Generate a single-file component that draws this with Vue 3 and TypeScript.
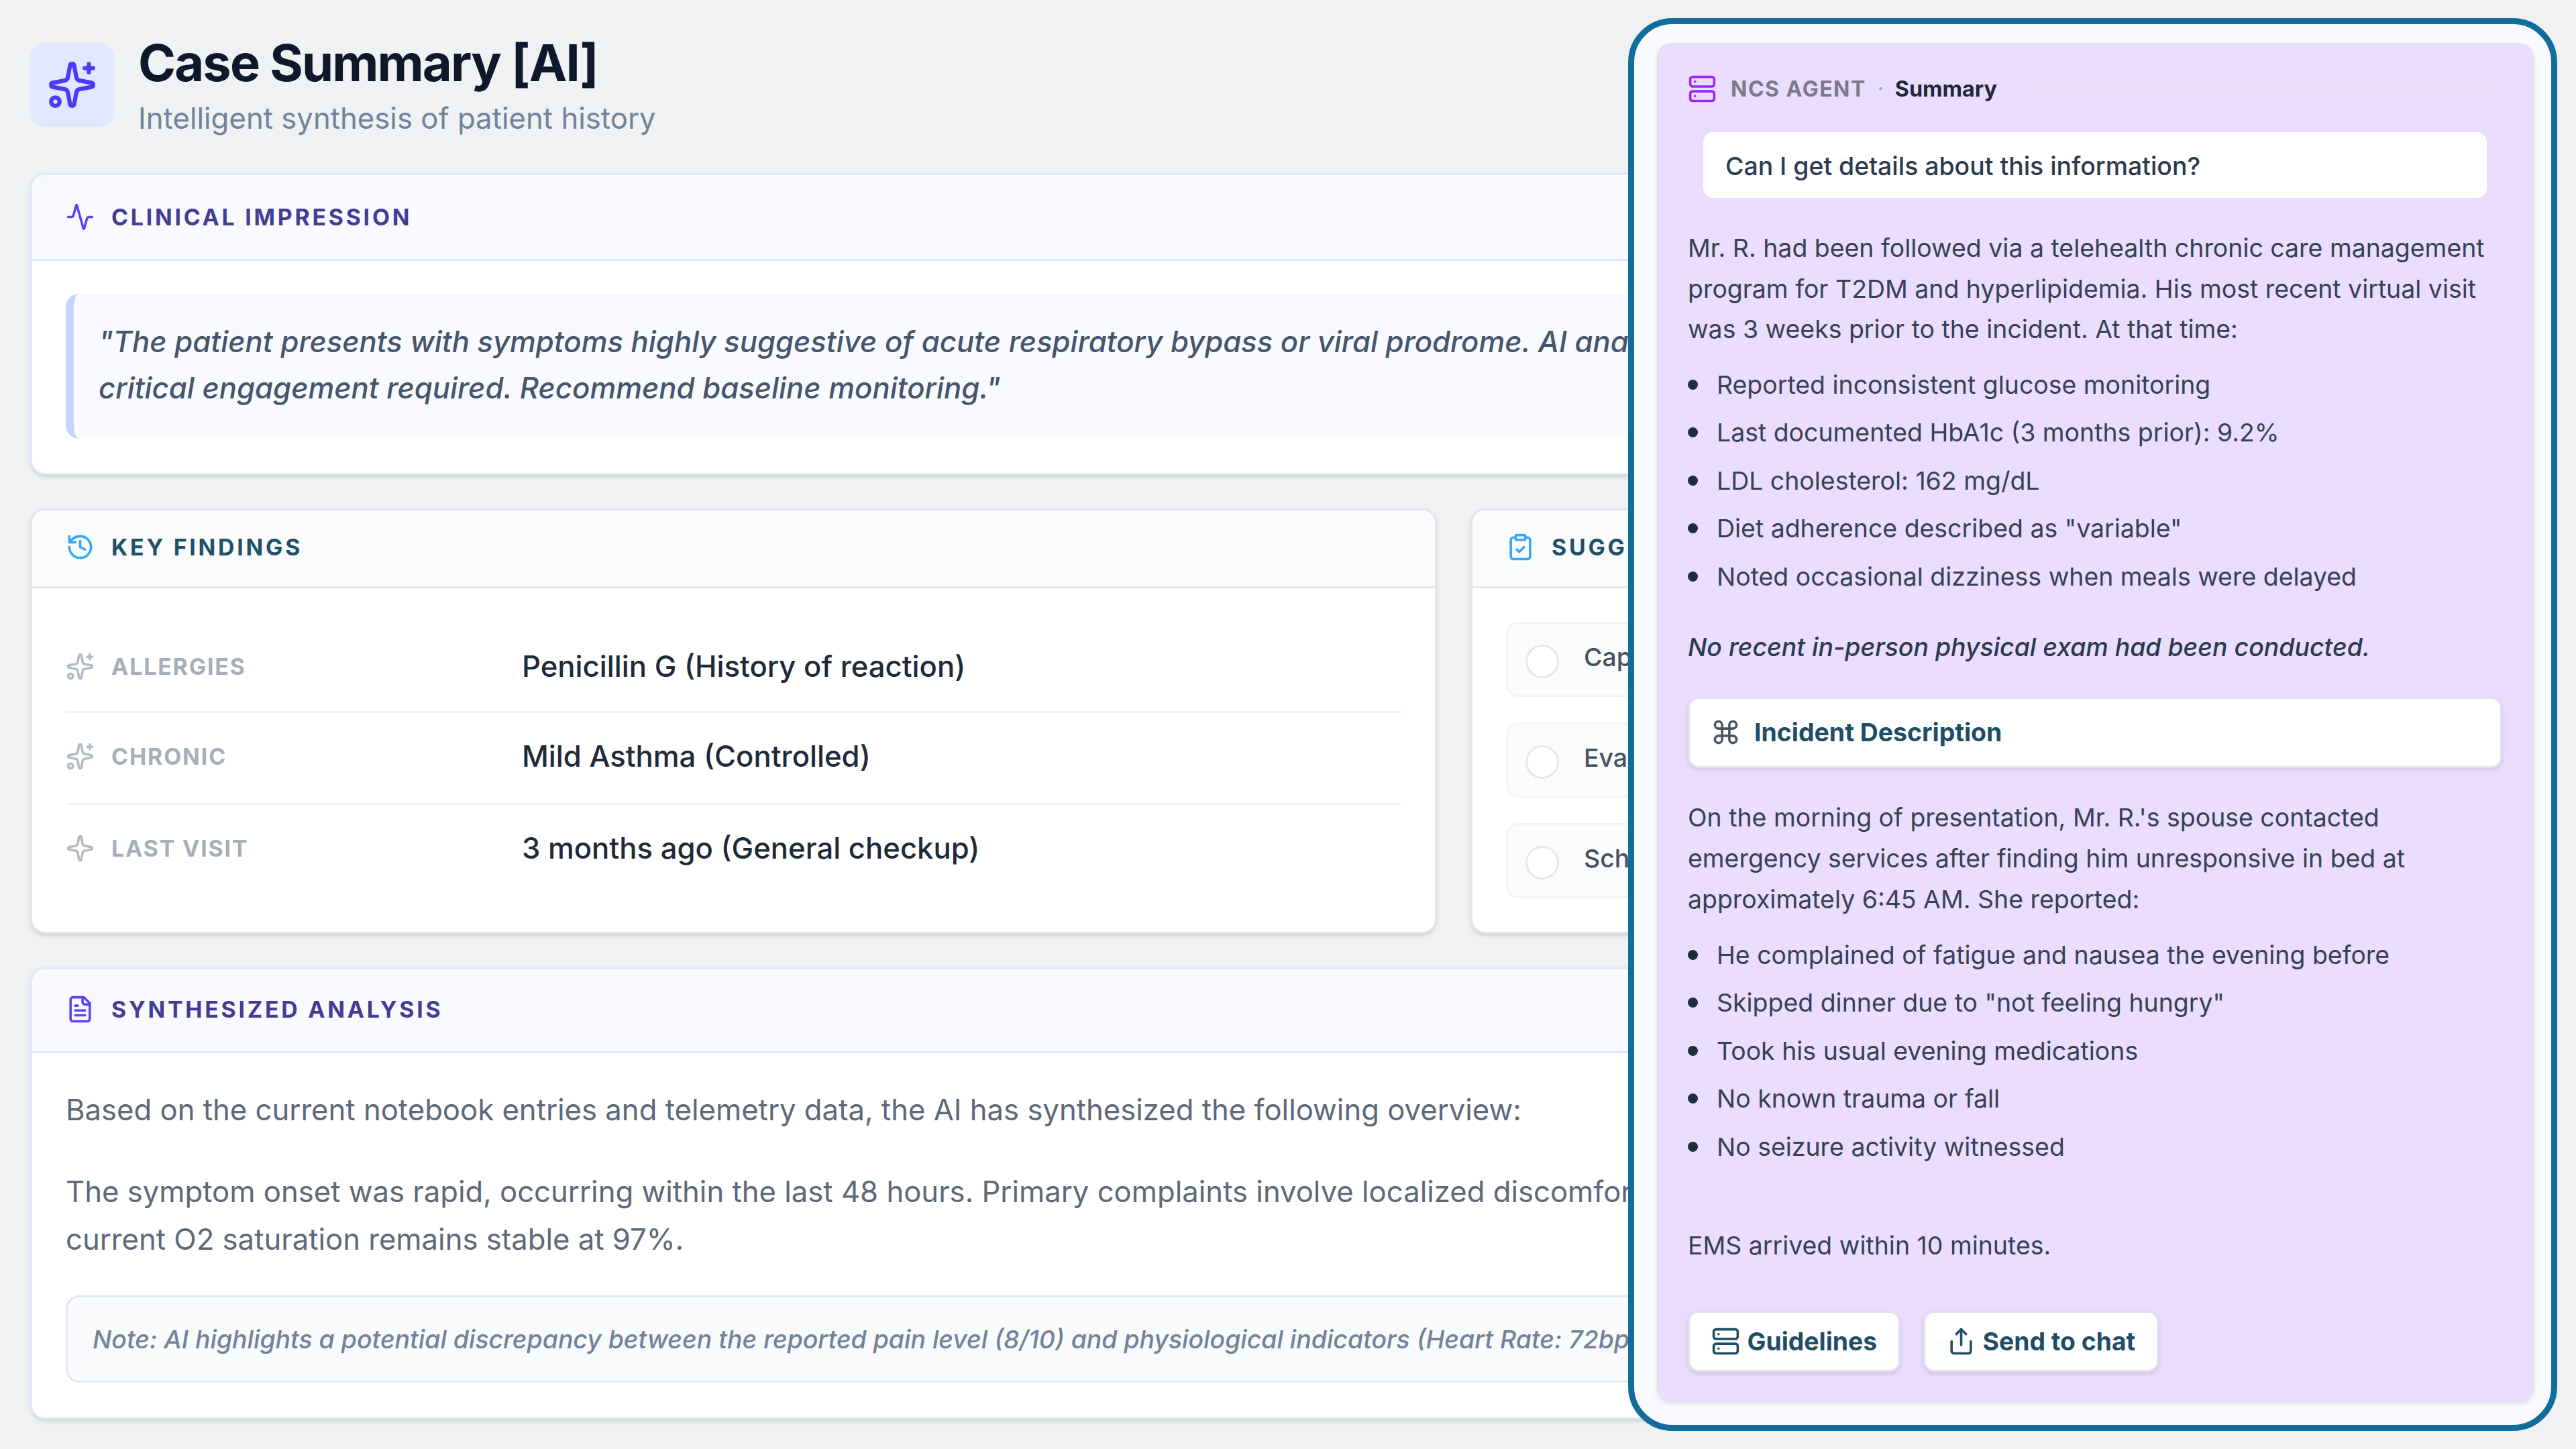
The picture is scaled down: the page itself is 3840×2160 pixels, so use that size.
<script setup lang="ts">
import { h, type FunctionalComponent } from 'vue'

const star =
  'M11.017 2.814a1 1 0 0 1 1.966 0l1.051 5.558a2 2 0 0 0 1.594 1.594l5.558 1.051a1 1 0 0 1 0 1.966l-5.558 1.051a2 2 0 0 0-1.594 1.594l-1.051 5.558a1 1 0 0 1-1.966 0l-1.051-5.558a2 2 0 0 0-1.594-1.594l-5.558-1.051a1 1 0 0 1 0-1.966l5.558-1.051a2 2 0 0 0 1.594-1.594z'

const icons: Record<string, string[]> = {
  sparkle: [star],
  sparkles: [star, 'M20 2v4', 'M22 4h-4', 'M2 20a2 2 0 1 0 4 0a2 2 0 1 0-4 0'],
  activity: [
    'M22 12h-2.48a2 2 0 0 0-1.93 1.46l-2.35 8.36a.25.25 0 0 1-.48 0L9.24 2.18a.25.25 0 0 0-.48 0l-2.35 8.36A2 2 0 0 1 4.49 12H2',
  ],
  history: ['M3 12a9 9 0 1 0 9-9 9.75 9.75 0 0 0-6.74 2.74L3 8', 'M3 3v5h5', 'M12 7v5l4 2'],
  clipboard: [
    'M9 2h6a1 1 0 0 1 1 1v2a1 1 0 0 1-1 1H9a1 1 0 0 1-1-1V3a1 1 0 0 1 1-1z',
    'M16 4h2a2 2 0 0 1 2 2v14a2 2 0 0 1-2 2H6a2 2 0 0 1-2-2V6a2 2 0 0 1 2-2h2',
    'm9 14 2 2 4-4',
  ],
  file: [
    'M15 2H6a2 2 0 0 0-2 2v16a2 2 0 0 0 2 2h12a2 2 0 0 0 2-2V7Z',
    'M14 2v4a2 2 0 0 0 2 2h4',
    'M10 9H8',
    'M16 13H8',
    'M16 17H8',
  ],
  server: [
    'M4 2h16a2 2 0 0 1 2 2v4a2 2 0 0 1-2 2H4a2 2 0 0 1-2-2V4a2 2 0 0 1 2-2z',
    'M4 14h16a2 2 0 0 1 2 2v4a2 2 0 0 1-2 2H4a2 2 0 0 1-2-2v-4a2 2 0 0 1 2-2z',
    'M6 6h.01',
    'M6 18h.01',
  ],
  command: ['M15 6v12a3 3 0 1 0 3-3H6a3 3 0 1 0 3 3V6a3 3 0 1 0-3 3h12a3 3 0 1 0-3-3'],
  share: ['M4 12v8a2 2 0 0 0 2 2h12a2 2 0 0 0 2-2v-8', 'm16 6-4-4-4 4', 'M12 2v13'],
}

const Icon: FunctionalComponent<{ name: string }> = (props) =>
  h(
    'svg',
    {
      viewBox: '0 0 24 24',
      fill: 'none',
      stroke: 'currentColor',
      'stroke-width': 2,
      'stroke-linecap': 'round',
      'stroke-linejoin': 'round',
    },
    icons[props.name].map((d) => h('path', { d })),
  )
Icon.props = ['name']

const findings = [
  { icon: 'sparkles', label: 'ALLERGIES', value: 'Penicillin G (History of reaction)' },
  { icon: 'sparkles', label: 'CHRONIC', value: 'Mild Asthma (Controlled)' },
  { icon: 'sparkle', label: 'LAST VISIT', value: '3 months ago (General checkup)' },
]

const actions = ['Capture', 'Evaluate', 'Schedule']

const background = [
  'Reported inconsistent glucose monitoring',
  'Last documented HbA1c (3 months prior): 9.2%',
  'LDL cholesterol: 162 mg/dL',
  'Diet adherence described as "variable"',
  'Noted occasional dizziness when meals were delayed',
]

const incident = [
  'He complained of fatigue and nausea the evening before',
  'Skipped dinner due to "not feeling hungry"',
  'Took his usual evening medications',
  'No known trauma or fall',
  'No seizure activity witnessed',
]
</script>

<template>
  <div class="page">
    <main class="summary">
      <header class="title-bar">
        <div class="tile"><Icon name="sparkles" class="icon" /></div>
        <div>
          <h1>Case Summary [AI]</h1>
          <p class="subtitle">Intelligent synthesis of patient history</p>
        </div>
      </header>

      <section class="card indigo impression">
        <div class="card-head"><Icon name="activity" class="icon" /><h2>CLINICAL IMPRESSION</h2></div>
        <blockquote>
          "The patient presents with symptoms highly suggestive of acute respiratory bypass or viral prodrome. AI analysis<br />
          critical engagement required. Recommend baseline monitoring."
        </blockquote>
      </section>

      <div class="pair">
        <section class="card neutral">
          <div class="card-head"><Icon name="history" class="icon" /><h2>KEY FINDINGS</h2></div>
          <div class="findings">
            <div v-for="f in findings" :key="f.label" class="finding">
              <Icon :name="f.icon" class="icon" />
              <span class="label">{{ f.label }}</span>
              <span class="value">{{ f.value }}</span>
            </div>
          </div>
        </section>
        <section class="card neutral">
          <div class="card-head"><Icon name="clipboard" class="icon" /><h2>SUGGESTED</h2></div>
          <div class="actions">
            <div v-for="a in actions" :key="a" class="action">
              <span class="radio"></span><span class="action-text">{{ a }}</span>
            </div>
          </div>
        </section>
      </div>

      <section class="card indigo analysis">
        <div class="card-head"><Icon name="file" class="icon" /><h2>SYNTHESIZED ANALYSIS</h2></div>
        <div class="analysis-body">
          <p>Based on the current notebook entries and telemetry data, the AI has synthesized the following overview:</p>
          <p>
            The symptom onset was rapid, occurring within the last 48 hours. Primary complaints involve localized discomfort,<br />
            current O2 saturation remains stable at 97%.
          </p>
          <div class="note">
            Note: AI highlights a potential discrepancy between the reported pain level (8/10) and physiological indicators (Heart Rate: 72bpm).
          </div>
        </div>
      </section>
    </main>

    <aside class="overlay">
      <div class="agent">
        <div class="agent-head">
          <Icon name="server" class="icon" />
          <span class="agent-name">NCS AGENT</span>
          <span class="dot">·</span>
          <span class="agent-topic">Summary</span>
          <span class="rule"></span>
        </div>
        <div class="question">Can I get details about this information?</div>
        <p class="para first">
          Mr. R. had been followed via a telehealth chronic care management<br />
          program for T2DM and hyperlipidemia. His most recent virtual visit<br />
          was 3 weeks prior to the incident. At that time:
        </p>
        <ul>
          <li v-for="b in background" :key="b">{{ b }}</li>
        </ul>
        <p class="remark">No recent in-person physical exam had been conducted.</p>
        <div class="section-chip"><Icon name="command" class="icon" /><span>Incident Description</span></div>
        <p class="para second">
          On the morning of presentation, Mr. R.'s spouse contacted<br />
          emergency services after finding him unresponsive in bed at<br />
          approximately 6:45 AM. She reported:
        </p>
        <ul>
          <li v-for="i in incident" :key="i">{{ i }}</li>
        </ul>
        <hr />
        <p class="para last">EMS arrived within 10 minutes.</p>
        <div class="buttons">
          <button type="button"><Icon name="server" class="icon" />Guidelines</button>
          <button type="button"><Icon name="share" class="icon" />Send to chat</button>
        </div>
      </div>
    </aside>
  </div>
</template>

<style>
body {
  margin: 0;
  background: #eff1f3;
}
</style>

<style scoped>
* {
  box-sizing: border-box;
}

h1,
h2,
p,
ul,
blockquote {
  margin: 0;
  padding: 0;
}

.page {
  position: relative;
  width: 3840px;
  height: 2160px;
  overflow: hidden;
  background: #eff1f3;
  font-family: Inter, 'Liberation Sans', sans-serif;
  white-space: nowrap;
}

.icon {
  flex: none;
  width: 43px;
  height: 43px;
}

.summary {
  display: flex;
  flex-direction: column;
  width: 3795px;
  padding: 45px 0 0 45px;
}

.title-bar {
  display: flex;
  gap: 36px;
  height: 213px;
}

.tile {
  display: flex;
  align-items: center;
  justify-content: center;
  width: 125px;
  height: 125px;
  margin-top: 19px;
  border-radius: 21px;
  background: #e0e7ff;
  color: #4f39f6;
}

.tile .icon {
  width: 75px;
  height: 75px;
}

h1 {
  font-size: 75.8px;
  font-weight: 700;
  line-height: 98px;
  letter-spacing: -1.88px;
  color: #0f172b;
}

.subtitle {
  margin-top: 6px;
  font-size: 43.7px;
  line-height: 56px;
  color: #71829b;
}

.card {
  overflow: hidden;
  border: 3px solid #e2e5ea;
  border-radius: 22px;
  background: #fff;
  box-shadow: 0 3px 8px rgba(0, 0, 0, 0.1), 0 3px 5px -3px rgba(0, 0, 0, 0.12);
}

.card.indigo {
  border-color: #e0e7ff;
}

.card-head {
  display: flex;
  align-items: center;
  gap: 25px;
  padding-left: 50px;
  border-bottom: 3px solid #e4e6eb;
  background: #fafbfd;
}

.indigo .card-head {
  border-bottom-color: #e0e7ff;
  background: #f9faff;
}

.card-head .icon {
  color: #36a7f7;
}

.indigo .card-head .icon {
  color: #5b42f7;
}

h2 {
  font-size: 33.8px;
  font-weight: 700;
  line-height: 44px;
  letter-spacing: 3.78px;
  color: #1f5068;
}

.indigo h2 {
  color: #433b94;
}

.impression {
  height: 450px;
}

.impression .card-head {
  height: 128px;
}

blockquote {
  height: 216px;
  margin: 49px 50px 0;
  padding: 38px 0 0 37px;
  border-left: 12px solid #c6d2ff;
  border-radius: 20px;
  background: #f9faff;
  font-size: 43.65px;
  font-style: italic;
  font-weight: 500;
  line-height: 68.5px;
  color: #45556c;
}

.pair {
  display: grid;
  grid-template-columns: 2097px 1fr;
  gap: 50px;
  margin-top: 50px;
}

.pair .card {
  height: 634px;
}

.pair .card-head {
  height: 116px;
  padding-bottom: 4px;
}

.findings {
  padding: 46px 50px 0;
}

.finding {
  display: flex;
  align-items: center;
  height: 137px;
  padding-top: 3px;
}

.finding + .finding {
  padding: 0 0 5px;
  border-top: 3px solid #f3f4f6;
}

.finding .icon {
  color: #b3b9c6;
}

.label {
  width: 612px;
  margin-left: 25px;
  font-size: 33.8px;
  font-weight: 700;
  letter-spacing: 1.9px;
  color: #a6aebb;
}

.value {
  font-size: 43.65px;
  font-weight: 500;
  color: #1e2939;
}

.actions {
  display: flex;
  flex-direction: column;
  gap: 38px;
  padding: 50px 50px 0;
}

.action {
  display: flex;
  height: 112px;
  padding: 0 26px;
  border: 3px solid #f3f4f6;
  border-radius: 18px;
  background: #fafbfd;
}

.radio {
  width: 50px;
  height: 50px;
  margin-top: 31px;
  border: 3px solid #e5e7eb;
  border-radius: 50%;
  background: #fff;
}

.action-text {
  margin: 23px 0 0 37px;
  font-size: 37.4px;
  font-weight: 500;
  line-height: 54px;
  color: #45505f;
}

.analysis {
  height: 674px;
  margin-top: 50px;
}

.analysis .card-head {
  height: 125px;
  padding-bottom: 3px;
}

.analysis-body {
  padding: 49px 50px 0;
}

.analysis-body p {
  margin-bottom: 50px;
  font-size: 43.65px;
  line-height: 71.5px;
  color: #5d6878;
}

.analysis-body .note {
  height: 130px;
  margin-top: -3px;
  padding-left: 37px;
  border: 3px solid #e2e8f0;
  border-radius: 20px;
  background: #f8fafc;
  font-size: 37.4px;
  font-style: italic;
  font-weight: 500;
  line-height: 125px;
  color: #71829b;
}

.overlay {
  position: absolute;
  top: 27px;
  left: 2427px;
  width: 1385px;
  height: 2106px;
  padding: 28px 0 0 34px;
  border: 9.6px solid #126d9c;
  border-radius: 66px;
  background: #f8fafd;
}

.agent {
  display: flex;
  flex-direction: column;
  width: 1307px;
  height: 2027px;
  padding: 0 44px 0 43px;
  border: 3px solid #e3e1ee;
  border-radius: 22px;
  background: #eaddff;
  box-shadow: 0 3px 8px rgba(0, 0, 0, 0.09);
  color: #364153;
}

.agent-head {
  display: flex;
  align-items: center;
  height: 130px;
}

.agent-head .icon {
  color: #9d24fa;
}

.agent-name {
  margin-left: 21px;
  font-size: 32px;
  font-weight: 700;
  letter-spacing: 1.5px;
  color: #7b798c;
}

.dot {
  width: 43px;
  text-align: center;
  font-size: 31.2px;
  color: #99a1af;
}

.agent-topic {
  font-size: 32.3px;
  font-weight: 700;
  color: #1e2939;
}

.rule {
  flex: 1;
  height: 3px;
  margin-left: 39px;
  background: #e5e3ec;
}

.question {
  width: 1168px;
  height: 98px;
  margin-left: 23px;
  padding-left: 33px;
  border-radius: 15px;
  background: #fff;
  font-size: 37.4px;
  font-weight: 500;
  line-height: 101px;
  color: #2b3a4c;
}

.para,
.remark {
  font-size: 37.43px;
  line-height: 60.5px;
}

.first {
  margin-top: 45px;
}

ul {
  margin-top: 16px;
  list-style: none;
}

li {
  display: flex;
  align-items: center;
  gap: 28px;
  height: 71.5px;
  font-size: 37.43px;
}

li::before {
  width: 15px;
  height: 15px;
  border-radius: 50%;
  background: #1e2d3d;
  content: '';
}

.remark {
  margin-top: 40px;
  font-style: italic;
  font-weight: 500;
  color: #2b3a4c;
}

.section-chip {
  display: flex;
  flex: none;
  align-items: center;
  height: 106px;
  margin-top: 43px;
  padding-left: 32px;
  gap: 21px;
  border: 3px solid #e3e1ee;
  border-radius: 16px;
  background: #fff;
  box-shadow: 0 3px 6px rgba(0, 0, 0, 0.1);
  font-size: 37.43px;
  font-weight: 700;
  color: #1d4e66;
}

.section-chip .icon {
  color: #4a5565;
}

.para.second {
  margin-top: 43px;
  line-height: 61.3px;
}

hr {
  flex: none;
  width: 100%;
  height: 3px;
  margin: 37px 0 0;
  border: 0;
  background: #e2e1ec;
}

.last {
  margin-top: 42px;
}

.buttons {
  display: flex;
  gap: 34px;
  margin-top: 67px;
}

button {
  display: flex;
  align-items: center;
  height: 91px;
  padding: 0 32px;
  gap: 10.5px;
  border: 3px solid #e3e1ee;
  border-radius: 16px;
  background: #fff;
  box-shadow: 0 3px 6px rgba(0, 0, 0, 0.12);
  font-family: inherit;
  font-size: 37.3px;
  font-weight: 700;
  color: #1d4e66;
}
</style>
